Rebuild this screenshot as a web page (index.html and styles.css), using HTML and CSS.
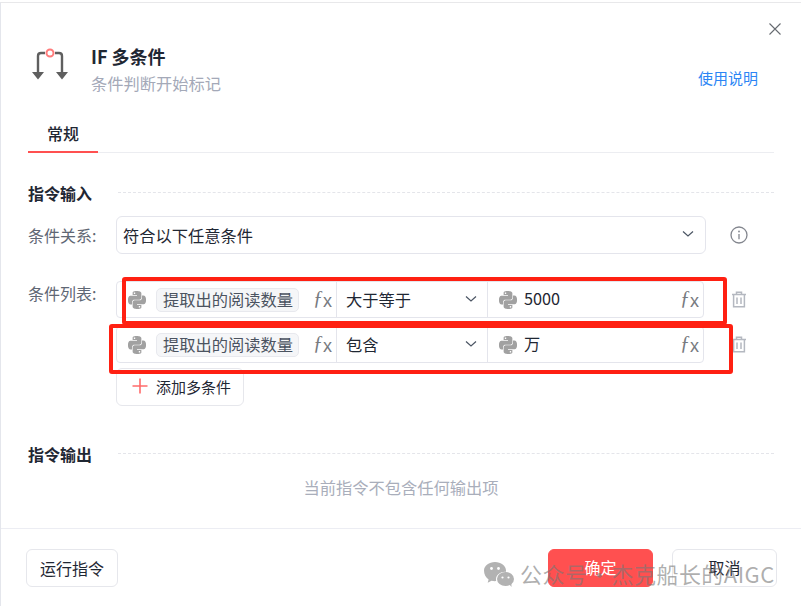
FILE: index.html
```html
<!DOCTYPE html>
<html lang="zh-CN">
<head>
    <meta charset="UTF-8">
    <meta name="viewport" content="width=device-width, initial-scale=1.0">
    <title>IF 多条件</title>
    <link rel="stylesheet" href="styles.css">
</head>
<body>
    <svg class="defs" width="0" height="0">
        <symbol id="py" viewBox="0 0 24 24">
            <path d="M14.25.18l.9.2.73.26.59.3.45.32.34.34.25.34.16.33.1.3.04.26.02.2-.01.13V8.5l-.05.63-.13.55-.21.46-.26.38-.3.31-.33.25-.35.19-.35.14-.33.1-.3.07-.26.04-.21.02H8.77l-.69.05-.59.14-.5.22-.41.27-.33.32-.27.35-.2.36-.15.37-.1.35-.07.32-.04.27-.02.21v3.06H3.17l-.21-.03-.28-.07-.32-.12-.35-.18-.36-.26-.36-.36-.35-.46-.32-.59-.28-.73-.21-.88-.14-1.05-.05-1.23.06-1.22.16-1.04.24-.87.32-.71.36-.57.4-.44.42-.33.42-.24.4-.16.36-.1.32-.05.24-.01h.16l.06.01h8.16v-.83H6.18l-.01-2.75-.02-.37.05-.34.11-.31.17-.28.25-.26.31-.23.38-.2.44-.18.51-.15.58-.12.64-.1.71-.06.77-.04.84-.02 1.27.05zm-6.3 1.98l-.23.33-.08.41.08.41.23.34.33.22.41.09.41-.09.33-.22.23-.34.08-.41-.08-.41-.23-.33-.33-.22-.41-.09-.41.09zm13.09 3.95l.28.06.32.12.35.18.36.27.36.35.35.47.32.59.28.73.21.88.14 1.04.05 1.23-.06 1.23-.16 1.04-.24.86-.32.71-.36.57-.4.45-.42.33-.42.24-.4.16-.36.09-.32.05-.24.02-.16-.01h-8.22v.82h5.84l.01 2.76.02.36-.05.34-.11.31-.17.29-.25.25-.31.24-.38.2-.44.17-.51.15-.58.13-.64.09-.71.07-.77.04-.84.01-1.27-.04-1.07-.14-.9-.2-.73-.25-.59-.3-.45-.33-.34-.34-.25-.34-.16-.33-.1-.3-.04-.25-.02-.2.01-.13v-5.34l.05-.64.13-.54.21-.46.26-.38.3-.32.33-.24.35-.2.35-.14.33-.1.3-.06.26-.04.21-.02.13-.01h5.84l.69-.05.59-.14.5-.21.41-.28.33-.32.27-.35.2-.36.15-.36.1-.35.07-.32.04-.28.02-.21V6.07h2.09l.14.01zm-6.47 14.25l-.23.33-.08.41.08.41.23.33.33.23.41.08.41-.08.33-.23.23-.33.08-.41-.08-.41-.23-.33-.33-.23-.41-.08-.41.08z"/>
        </symbol>
        <symbol id="chevron" viewBox="0 0 12 8">
            <path d="M1 1.5l5 4.5 5-4.5" fill="none" stroke="currentColor" stroke-width="1.2"/>
        </symbol>
        <symbol id="trash" viewBox="0 0 16 17">
            <path d="M1 3.500h14M5.500 3.500V1.200h5v2.300M2.600 3.500v12.300h10.800V3.500M6 6.500v6.500M10 6.500v6.500" fill="none" stroke="currentColor" stroke-width="1.5"/>
        </symbol>
    </svg>

    <div class="dialog">
        <svg class="close" width="12" height="12" viewBox="0 0 12 12">
            <path d="M.5.5l11 11M11.500.5l-11 11" fill="none" stroke="#666a70" stroke-width="1.1"/>
        </svg>

        <div class="head">
            <svg class="head-icon" width="36" height="34" viewBox="0 0 36 34">
                <path d="M6 28V10q0-3 3-3h4M30 28V10q0-3-3-3h-4" fill="none" stroke="#5f5f5f" stroke-width="2.4"/>
                <path d="M0 26h12l-6 7.500zM24 26h12l-6 7.500z" fill="#5f5f5f"/>
                <circle cx="18" cy="7" r="3.500" fill="#fff" stroke="#ff7b7b" stroke-width="2"/>
            </svg>
            <div class="head-text">
                <div class="head-title">IF 多条件</div>
                <div class="head-sub">条件判断开始标记</div>
            </div>
            <a class="help">使用说明</a>
        </div>

        <div class="tabs">
            <div class="tab">常规</div>
        </div>

        <div class="section-title section-input">
            <span>指令输入</span>
            <i class="dash"></i>
        </div>

        <div class="form-row">
            <label class="form-label">条件关系:</label>
            <div class="select-box">
                <span>符合以下任意条件</span>
                <svg class="chev" width="12" height="8"><use href="#chevron"/></svg>
            </div>
            <svg class="info" width="18" height="18" viewBox="0 0 18 18">
                <circle cx="9" cy="9" r="8" fill="none" stroke="#83868e" stroke-width="1.300"/>
                <path d="M9 8v5.200" stroke="#83868e" stroke-width="1.300"/>
                <circle cx="9" cy="5.500" r=".9" fill="#83868e"/>
            </svg>
        </div>

        <div class="form-row list-row">
            <label class="form-label">条件列表:</label>
            <div class="cond-list">
                <div class="cond">
                    <div class="cond-box">
                        <div class="seg seg-var">
                            <svg class="py" width="18" height="18"><use href="#py"/></svg>
                            <span class="tag">提取出的阅读数量</span>
                            <span class="fx">ƒ<small>x</small></span>
                        </div>
                        <div class="seg seg-op">
                            <span>大于等于</span>
                            <svg class="chev" width="12" height="8"><use href="#chevron"/></svg>
                        </div>
                        <div class="seg seg-val">
                            <svg class="py" width="18" height="18"><use href="#py"/></svg>
                            <span class="val">5000</span>
                            <span class="fx">ƒ<small>x</small></span>
                        </div>
                    </div>
                    <svg class="trash" width="16" height="17"><use href="#trash"/></svg>
                </div>
                <div class="cond">
                    <div class="cond-box">
                        <div class="seg seg-var">
                            <svg class="py" width="18" height="18"><use href="#py"/></svg>
                            <span class="tag">提取出的阅读数量</span>
                            <span class="fx">ƒ<small>x</small></span>
                        </div>
                        <div class="seg seg-op">
                            <span>包含</span>
                            <svg class="chev" width="12" height="8"><use href="#chevron"/></svg>
                        </div>
                        <div class="seg seg-val">
                            <svg class="py" width="18" height="18"><use href="#py"/></svg>
                            <span class="val">万</span>
                            <span class="fx">ƒ<small>x</small></span>
                        </div>
                    </div>
                    <svg class="trash" width="16" height="17"><use href="#trash"/></svg>
                </div>
                <button class="btn add-btn">
                    <svg width="16" height="16" viewBox="0 0 16 16">
                        <path d="M8 .5v15M.5 8h15" stroke="#ff6b6b" stroke-width="1.600"/>
                    </svg>
                    添加多条件
                </button>
            </div>
        </div>

        <div class="section-title section-output">
            <span>指令输出</span>
            <i class="dash"></i>
        </div>
        <div class="empty">当前指令不包含任何输出项</div>

        <div class="foot">
            <button class="btn run-btn">运行指令</button>
            <div class="foot-right">
                <button class="btn ok-btn">确定</button>
                <button class="btn cancel-btn">取消</button>
            </div>
        </div>

        <!-- красные рамки поверх скриншота -->
        <div class="mark mark-one"></div>
        <div class="mark mark-two"></div>

        <div class="watermark">
            <svg width="30" height="25" viewBox="0 0 30 25">
                <path d="M11 0c6 0 11 3.800 11 8.600 0 .5 0 .9-.1 1.300-5.200-.4-9.900 3-9.900 7.600 0 .6.1 1.100.2 1.600-.4 0-.8.100-1.200.100-1.200 0-2.400-.2-3.500-.5l-3.800 2 .9-3.300C1.800 15.800 0 12.400 0 8.600 0 3.800 5 0 11 0z" fill="#b2b2b2"/>
                <ellipse cx="21.500" cy="17" rx="8.500" ry="7" fill="#b2b2b2"/>
                <path d="M25 22l2.500 3-.2-4.500z" fill="#b2b2b2"/>
                <circle cx="7.500" cy="6.500" r="1.400" fill="#fff"/>
                <circle cx="14.500" cy="6.500" r="1.400" fill="#fff"/>
                <circle cx="18.500" cy="15.500" r="1.100" fill="#fff"/>
                <circle cx="24.500" cy="15.500" r="1.100" fill="#fff"/>
            </svg>
            <span class="watermark-text">公众号 · 杰克船长的AIGC</span>
        </div>
    </div>
</body>
</html>
```

FILE: styles.css
```css
html, body {
    margin: 0;
    height: 606px;
    overflow: hidden;
    background-color: #ffffff;
}
body {
    font-family: "Noto Sans CJK SC", "Noto Sans", sans-serif;
    font-size: 16.25px;
    color: #1f2733;
}
.defs {
    display: block;
    height: 0;
}
.dialog {
    position: relative;
    box-sizing: border-box;
    height: 604px;
    margin-top: 2px;
    border-top: 1px solid #e8e8ea;
    border-left: 1px solid #e4e6ec;
}
.close {
    position: absolute;
    top: 20px;
    right: 20px;
}

/* шапка */
.head {
    display: flex;
    align-items: flex-start;
    height: 96px;
    padding: 41px 43px 0 31px;
    box-sizing: border-box;
}
.head-icon {
    margin-top: 2px;
}
.head-text {
    flex: 1;
    margin-left: 23px;
}
.head-title {
    font-size: 18px;
    font-weight: 700;
    line-height: 24px;
}
.head-sub {
    font-size: 16.25px;
    line-height: 24px;
    margin-top: 3px;
    color: #a4a9b8;
}
.help {
    margin-top: 24px;
    font-size: 15px;
    line-height: 20px;
    color: #2b85f5;
}

/* вкладки */
.tabs {
    height: 54px;
    margin: 0 27px;
    box-sizing: border-box;
    border-bottom: 1px solid #ecedf1;
}
.tab {
    box-sizing: border-box;
    width: 70px;
    height: 54px;
    padding-top: 22px;
    text-align: center;
    font-size: 16px;
    font-weight: 500;
    line-height: 24px;
    border-bottom: 2px solid #ff5050;
}

/* заголовки секций */
.section-title {
    display: flex;
    align-items: center;
    margin: 0 27px;
    height: 24px;
    font-size: 16px;
    font-weight: 700;
}
.section-input {
    margin-top: 28px;
}
.section-output {
    margin-top: 36px;
}
.dash {
    flex: 1;
    margin-left: 26px;
    margin-bottom: 2px;
    border-top: 1px dashed #e4e5ea;
}

/* строки формы */
.form-row {
    display: flex;
    margin: 11px 0 0 27px;
}
.form-label {
    width: 88px;
    font-size: 16px;
    line-height: 38px;
    color: #5f6774;
}
.select-box {
    display: flex;
    align-items: center;
    justify-content: space-between;
    box-sizing: border-box;
    width: 590px;
    height: 38px;
    padding: 0 11px 2px 6px;
    border: 1px solid #e4e5ec;
    border-radius: 6px;
}
.select-box span {
    margin-top: 2px;
}
.chev {
    color: #4b5563;
}
.info {
    margin: 10px 0 0 24px;
}
.list-row {
    margin-top: 27px;
}
.list-row .form-label {
    line-height: 24px;
}
.cond-list {
    display: flex;
    flex-direction: column;
    align-items: flex-start;
}
.cond {
    display: flex;
    align-items: center;
    margin-bottom: 8px;
}
.cond-box {
    display: flex;
    box-sizing: border-box;
    width: 588px;
    height: 37px;
    border: 1px solid #e4e5ec;
    border-radius: 4px;
}
.seg {
    display: flex;
    align-items: center;
    box-sizing: border-box;
    height: 100%;
}
.seg-var {
    width: 220px;
    padding: 0 4px 0 11px;
    border-right: 1px solid #e4e5ec;
}
.seg-op {
    justify-content: space-between;
    width: 151px;
    padding: 0 10px 2px 9px;
    border-right: 1px solid #e4e5ec;
}
.seg-val {
    flex: 1;
    padding: 0 4px 0 11px;
}
.py {
    flex: none;
    fill: #a1a1a1;
}
.tag {
    margin-left: 10px;
    padding: 0 5px 0 6px;
    height: 24px;
    line-height: 21px;
    white-space: nowrap;
    color: #4b5360;
    background-color: #f5f6f8;
    border: 1px solid #e8e9ee;
    border-radius: 5px;
    box-sizing: border-box;
}
.fx {
    margin-left: auto;
    font-family: "Liberation Serif", serif;
    font-style: italic;
    font-size: 20px;
    line-height: 24px;
    color: #777a80;
}
.fx small {
    font-family: "Liberation Sans", sans-serif;
    font-style: normal;
    font-size: 18px;
    vertical-align: -2px;
}
.val {
    margin-left: 7px;
    margin-bottom: 3px;
}
.trash {
    margin-left: 27px;
    color: #b4b8c0;
}

/* кнопки */
.btn {
    box-sizing: border-box;
    height: 38px;
    padding: 0;
    font-family: inherit;
    font-size: 16px;
    color: #1f2733;
    background-color: #ffffff;
    border: 1px solid #e6e7ec;
    border-radius: 6px;
}
.add-btn {
    display: flex;
    align-items: center;
    gap: 8px;
    width: 128px;
    padding: 0 0 2px 15px;
    margin-top: -3px;
    font-size: 15px;
}
.foot {
    position: absolute;
    left: 0;
    right: 0;
    top: 525px;
    display: flex;
    justify-content: space-between;
    padding: 20px 24px 0 25px;
    border-top: 1px solid #ecedf3;
}
.foot-right {
    display: flex;
    gap: 19px;
}
.run-btn {
    width: 92px;
}
.ok-btn {
    width: 105px;
    padding-bottom: 2px;
    color: #ffffff;
    background-color: #ff5050;
    border-color: #ff5050;
}
.cancel-btn {
    width: 105px;
    padding-bottom: 2px;
}
.empty {
    margin-top: 9px;
    text-align: center;
    line-height: 24px;
    color: #a9aebb;
}

/* поверх контента */
.mark {
    position: absolute;
    box-sizing: border-box;
    border: 4px solid #ff2012;
    border-radius: 3px;
}
.mark-one {
    left: 121px;
    top: 274px;
    width: 605px;
    height: 48px;
}
.mark-two {
    left: 108px;
    top: 321px;
    width: 624px;
    height: 50px;
}
.watermark {
    position: absolute;
    left: 483px;
    top: 555px;
    display: flex;
    align-items: center;
    gap: 6px;
    font-size: 22px;
    line-height: 30px;
    white-space: nowrap;
    color: rgba(120, 120, 120, 0.6);
}
.watermark-text {
    margin-bottom: 2px;
    letter-spacing: 0.45px;
    word-spacing: -4.5px;
}
```
